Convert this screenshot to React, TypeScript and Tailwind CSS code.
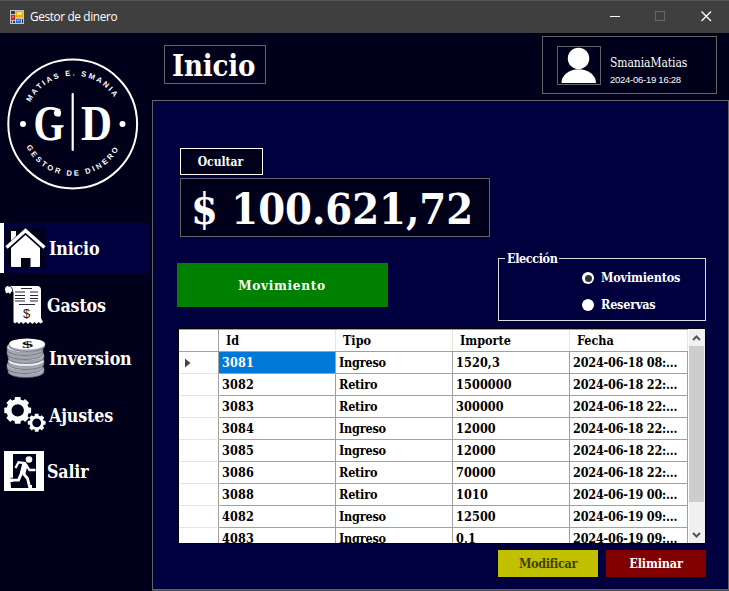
import type { ReactNode } from 'react';

const serif = "font-['DejaVu_Serif_Condensed','DejaVu_Serif',serif] [font-stretch:condensed] font-bold whitespace-nowrap leading-none";

const rows = [
  ['3081', 'Ingreso', '1520,3', '2024-06-18 08:...'],
  ['3082', 'Retiro', '1500000', '2024-06-18 22:...'],
  ['3083', 'Retiro', '300000', '2024-06-18 22:...'],
  ['3084', 'Ingreso', '12000', '2024-06-18 22:...'],
  ['3085', 'Ingreso', '12000', '2024-06-18 22:...'],
  ['3086', 'Retiro', '70000', '2024-06-18 22:...'],
  ['3088', 'Retiro', '1010', '2024-06-19 00:...'],
  ['4082', 'Ingreso', '12500', '2024-06-19 09:...'],
  ['4083', 'Ingreso', '0,1', '2024-06-19 09:...'],
];

function FormIcon() {
  return (
    <svg width="14" height="14" viewBox="0 0 14 14" shapeRendering="crispEdges">
      <rect width="14" height="14" fill="#c4c4c4" />
      <rect x="1" y="1" width="4" height="3" fill="#3a3a3a" />
      <rect x="1" y="11" width="1" height="2" fill="#3a3a3a" />
      <rect x="3" y="11" width="2" height="2" fill="#3a3a3a" />
      <rect x="12" y="9" width="1" height="4" fill="#3a3a3a" />
      <rect x="1" y="5" width="4" height="5" fill="#c8201c" />
      <rect x="2" y="6" width="2" height="2" fill="#f06a5c" />
      <rect x="6" y="1" width="7" height="6" fill="#efa90c" />
      <rect x="7" y="2" width="5" height="3" fill="#ffe27a" />
      <rect x="6" y="9" width="5" height="4" fill="#2f6fd6" />
      <rect x="7" y="10" width="3" height="1" fill="#8fbcff" />
    </svg>
  );
}

function Logo() {
  return (
    <svg width="150" height="150" viewBox="0 0 150 150" fill="#fff">
      <defs>
        <path id="top" d="M 30.300 52.300 A 48.500 48.500 0 0 1 119 57" />
        <path id="bottom" d="M 26.300 96.500 A 52 52 0 0 0 121 94" />
      </defs>
      <circle cx="72.700" cy="74" r="64.400" fill="none" stroke="#fff" strokeWidth="2" />
      <text className="font-['Liberation_Sans',sans-serif] text-[7.600px] font-bold">
        <textPath href="#top" textLength="101">MATIAS E. SMANIA</textPath>
      </text>
      <text className="font-['Liberation_Sans',sans-serif] text-[7.600px] font-bold">
        <textPath href="#bottom" textLength="113">GESTOR DE DINERO</textPath>
      </text>
      <text x="33.500" y="90" textLength="31" lengthAdjust="spacingAndGlyphs" className="font-['Liberation_Serif',serif] text-[50px] font-bold">G</text>
      <circle cx="57.500" cy="63" r="3.600" />
      <text x="81" y="90" textLength="31" lengthAdjust="spacingAndGlyphs" className="font-['Liberation_Serif',serif] text-[50px] font-bold">D</text>
      <rect x="71.600" y="43" width="2.200" height="58" rx="1" />
      <circle cx="23" cy="74" r="3" />
      <circle cx="122.500" cy="74" r="3" />
    </svg>
  );
}

function HomeIcon() {
  return (
    <svg width="41" height="40" viewBox="0 0 41 40" className="bg-[#000019]">
      <path d="M6 3h5v5l-5 5z" fill="#fff" />
      <path d="M1.500 19.500 L20.500 2.500 L39.500 19.500" fill="none" stroke="#fff" strokeWidth="3.400" />
      <path d="M20.500 7 L35 20 V38 q0 1-1 1 H25.500 V30 H16 V39 H7 q-1 0-1-1 V20z" fill="#fff" />
    </svg>
  );
}

function ReceiptIcon() {
  return (
    <svg width="38" height="40" viewBox="0 0 38 40">
      <path d="M3 1H32q4 0 4 4V33l2 4-2.500 1.500-2-1.500-2 2-2-2-2 2-2.500-2-2 2-2.500-2-2 2-2.500-2-2 2-2-2-2 1.500-1.500-1.500V7L6.500 6.500 5 9 3.500 7.500 1 8.500 0 5Q0 1 3 1z" fill="#fff" />
      <path d="M3 1Q8 1 7.500 7M16 3.500h11M10 7h10M25 7h8M10 10.500h10M25 10.500h8M10 13.500h10M25 13.500h8M10 16h10M25 16h8M14 19.500h16" stroke="#292938" strokeWidth="1" fill="none" />
      <text x="21.500" y="33" textAnchor="middle" fill="#151520" className="font-['Liberation_Sans',sans-serif] text-[13px] font-normal">$</text>
    </svg>
  );
}

function CoinsIcon() {
  return (
    <svg width="40" height="40" viewBox="0 0 40 40">
      {[32, 28, 24, 18, 14, 10].map((y, i) => {
        const cx = [20, 19, 20, 20, 19, 19][i];
        return (
          <g key={y}>
            <path d={`M${cx - 18} ${y - 1}v3a18 5.500 0 0 0 36 0v-3`} fill="#a6a6b4" stroke="#565664" strokeWidth=".7" />
            <ellipse cx={cx} cy={y - 1} rx="18" ry="5.500" fill="#ededf2" stroke="#70707c" strokeWidth=".5" />
          </g>
        );
      })}
      <path d="M3 6v2a18 5.500 0 0 0 36 0V6" fill="#a6a6b4" stroke="#565664" strokeWidth=".6" />
      <ellipse cx="21" cy="6" rx="18" ry="5.500" fill="#fff" />
      <g transform="translate(21.500 9.500) rotate(-4) scale(2 .8)">
        <text textAnchor="middle" fill="#080810" className="font-['Liberation_Serif',serif] text-[11.500px] font-bold">$</text>
      </g>
    </svg>
  );
}

function Gear({ cx, cy, r, w }: { cx: number; cy: number; r: number; w: number }) {
  return (
    <g transform={`translate(${cx} ${cy})`}>
      <circle r={r} fill="none" stroke="#fff" strokeWidth={w} />
      {[0, 45, 90, 135, 180, 225, 270, 315].map((a) => (
        <rect key={a} x={-r * 0.34} y={-r * 1.54} width={r * 0.68} height={r * 0.5} rx="0.800" fill="#fff" transform={`rotate(${a})`} />
      ))}
    </g>
  );
}

function GearsIcon() {
  return (
    <svg width="42" height="36" viewBox="0 0 42 36">
      <Gear cx={13.700} cy={13.400} r={8.700} w={5} />
      <Gear cx={32.700} cy={25.800} r={5.800} w={2.800} />
    </svg>
  );
}

function ExitIcon() {
  return (
    <svg width="40" height="40" viewBox="0 0 40 40">
      <rect width="40" height="40" fill="#fff" />
      <path d="M9 3H32V37H7L6.500 31H9z" fill="#00001b" />
      <circle cx="25" cy="8.500" r="3.300" fill="#fff" />
      <path d="M11.500 17 L14.500 11.300 L21 12 L25.500 19 H31.500" fill="none" stroke="#fff" strokeWidth="2.300" />
      <path d="M21 13 L18.500 23" stroke="#fff" strokeWidth="5.600" />
      <path d="M18 21 L14.500 29 H6.500" fill="none" stroke="#fff" strokeWidth="3" />
      <path d="M18.500 21.500 L23.500 27.500 L25.500 35.500 H28" fill="none" stroke="#fff" strokeWidth="2.800" />
      <path d="M6.500 27.200H13.500" stroke="#00001b" strokeWidth="0.800" />
    </svg>
  );
}

function NavItem({ icon, children, className }: { icon: ReactNode; children: ReactNode; className: string }) {
  return (
    <a className={`${serif} flex h-[50px] w-[149px] shrink-0 items-center text-[17.700px] tracking-[-0.160px] text-white ${className}`}>
      {icon}
      <span className="pt-[2px]">{children}</span>
    </a>
  );
}

export default function App() {
  return (
    <div className="flex h-[591px] w-[729px] flex-col overflow-hidden bg-[#00001b]">
      <header className="flex h-[33px] shrink-0 items-center border-t border-[#565656] bg-[#3f3f3f] pl-[10px] text-white">
        <FormIcon />
        <h1 className="ml-[6px] flex-1 font-['Open_Sans','Noto_Sans',sans-serif] text-[11.800px] leading-none tracking-[-0.360px]">Gestor de dinero</h1>
        <svg width="119" height="32" viewBox="0 0 119 32" fill="none" shapeRendering="crispEdges">
          <path d="M0 15.500h10" stroke="#fff" />
          <rect x="45.500" y="10.500" width="9" height="9" stroke="#666" />
          <path d="M91.500 10.500l9.500 9.500M101 10.500l-9.500 9.500" stroke="#fff" strokeWidth="1.300" shapeRendering="auto" />
        </svg>
      </header>

      <div className="flex min-h-0 flex-1">
        <aside className="flex w-[152px] shrink-0 flex-col pt-[17px]">
          <Logo />
          <nav className="mt-[23px] flex flex-col">
            <NavItem className="gap-[3px] border-l-4 border-white bg-[#00003f] pl-px" icon={<HomeIcon />}>Inicio</NavItem>
            <NavItem className="mt-[7px] gap-[4px] pl-[5px]" icon={<ReceiptIcon />}>Gastos</NavItem>
            <NavItem className="mt-[3px] gap-[3px] pl-[6px]" icon={<CoinsIcon />}>Inversion</NavItem>
            <NavItem className="mt-[7px] gap-[3px] pl-[4px]" icon={<GearsIcon />}>Ajustes</NavItem>
            <NavItem className="mt-[6px] gap-[3px] pl-[4px]" icon={<ExitIcon />}>Salir</NavItem>
          </nav>
        </aside>

        <div className="flex min-w-0 flex-1 flex-col">
          <div className="flex h-[67px] shrink-0 items-start justify-between pl-3 pr-3">
            <h2 className={`${serif} mt-3 flex h-[39px] w-[102px] items-center border border-[#646464] pl-[7px] pt-[3px] text-[29px] tracking-[-0.200px] text-white`}>Inicio</h2>
            <div className="mt-[3px] flex h-[58px] w-[175px] border border-[#646464] pl-[14px] pt-[9px]">
              <svg width="44" height="39" viewBox="0 0 44 39" className="border border-[#646464]" fill="#fff">
                <circle cx="21.500" cy="12" r="11.300" />
                <path d="M3.500 38a18.200 14.500 0 0 1 36.400 0z" />
              </svg>
              <div className="ml-[9px] pt-[10px] text-white">
                <p className="whitespace-nowrap font-['DejaVu_Serif_Condensed','DejaVu_Serif',serif] text-[12px] leading-[14px] tracking-[-0.080px] [font-stretch:condensed]">SmaniaMatias</p>
                <p className="mt-[4px] whitespace-nowrap font-['Liberation_Sans',sans-serif] text-[9.500px] leading-[11px] tracking-[-0.260px]">2024-06-19 16:28</p>
              </div>
            </div>
          </div>

          <main className="flex h-[490px] w-[577px] shrink-0 flex-col border border-[#646464] bg-[#00003f] pl-[24px]">
            <button className={`${serif} ml-[3px] mt-[47px] h-[27px] w-[83px] shrink-0 border border-white bg-[#00001b] pr-[2px] text-[12px] text-white`}>Ocultar</button>
            <p className={`${serif} ml-[3px] mt-[3px] flex h-[59px] w-[310px] shrink-0 items-center border border-[#646464] bg-[#00001b] pl-[10px] pt-[4px] text-[43px] tracking-[-0.050px] text-white`}>$ 100.621,72</p>

            <div className="mt-[15px] flex h-[69px] shrink-0 justify-between pr-[22px]">
              <button className={`${serif} mt-[11px] h-[44px] w-[211px] bg-[#008000] pr-px pt-[2px] text-[13.500px] tracking-[0.650px] text-white`}>Movimiento</button>
              <fieldset className={`${serif} h-[69px] w-[208px] border border-[#dcdcdc] pl-[83px] text-[12.500px] tracking-[-0.200px] text-white`}>
                <legend className="ml-[-77px] h-[13px] px-[2px] leading-[13px] tracking-[-0.400px]">Elección</legend>
                <label className="mt-[6px] flex h-[14px] items-center gap-[7px]">
                  <span className="flex size-3 items-center justify-center rounded-full bg-white"><i className="size-[7px] rounded-full bg-[#333]" /></span>
                  Movimientos
                </label>
                <label className="mt-[13px] flex h-[14px] items-center gap-[7px]">
                  <span className="size-3 rounded-full bg-white" />
                  Reservas
                </label>
              </fieldset>
            </div>

            <section className="ml-px mt-[7px] flex h-[216px] w-[528px] shrink-0 overflow-hidden border border-black bg-white">
              <div className={`${serif} h-[214px] w-[509px] overflow-hidden border-t border-[#a0a0a0] text-[12.500px] text-black`}>
                <div className="grid h-[22px] grid-cols-[40px_117px_117px_117px_118px] border-b border-[#a0a0a0]">
                  <span className="border-r border-[#a0a0a0]" />
                  {['Id', 'Tipo', 'Importe', 'Fecha'].map((h) => (
                    <span key={h} className="border-r border-[#e5e5e5] pl-[7px] leading-[21px]">{h}</span>
                  ))}
                </div>
                {rows.map((r, i) => (
                  <div key={r[0]} className="grid h-[22px] grid-cols-[40px_117px_117px_117px_118px]">
                    <span className="flex items-center border-b border-r border-b-[#e5e5e5] border-r-[#a0a0a0] pl-[6px]">
                      {i === 0 && <svg width="6" height="10" viewBox="0 0 6 10"><path d="M0 0.500L5.500 5L0 9.500z" fill="#444" /></svg>}
                    </span>
                    {r.map((c, j) => (
                      <span
                        key={j}
                        className={`border-b border-r border-[#a0a0a0] pl-[3px] leading-[21px] ${j === 3 ? 'tracking-[-0.190px]' : j === 1 ? 'tracking-[-0.200px]' : 'tracking-[0.140px]'} ${i === 0 && j === 0 ? 'bg-[#0078d7] text-white' : ''}`}
                      >
                        {c}
                      </span>
                    ))}
                  </div>
                ))}
              </div>
              <div className="ml-px flex w-4 flex-col bg-[#f0f0f0]">
                <svg width="16" height="17" viewBox="0 0 16 17"><path d="M4 11L7.500 7.500L11 11" fill="none" stroke="#555" strokeWidth="2" /></svg>
                <div className="h-[156px] w-[15px] bg-[#cdcdcd]" />
                <svg width="16" height="17" viewBox="0 0 16 17" className="mt-auto"><path d="M4 7L7.500 10.500L11 7" fill="none" stroke="#555" strokeWidth="2" /></svg>
              </div>
            </section>

            <div className={`${serif} mt-[6px] flex justify-end gap-2 pr-[22px] text-[12.500px]`}>
              <button className="h-[27px] w-[100px] bg-[#c0c000] pt-px tracking-[-0.350px] text-[#404000]">Modificar</button>
              <button className="h-[27px] w-[100px] bg-[#800000] pt-px tracking-[-0.150px] text-white">Eliminar</button>
            </div>
          </main>
          <div className="h-px shrink-0 bg-[#4a4a4a]" />
        </div>
      </div>
    </div>
  );
}
